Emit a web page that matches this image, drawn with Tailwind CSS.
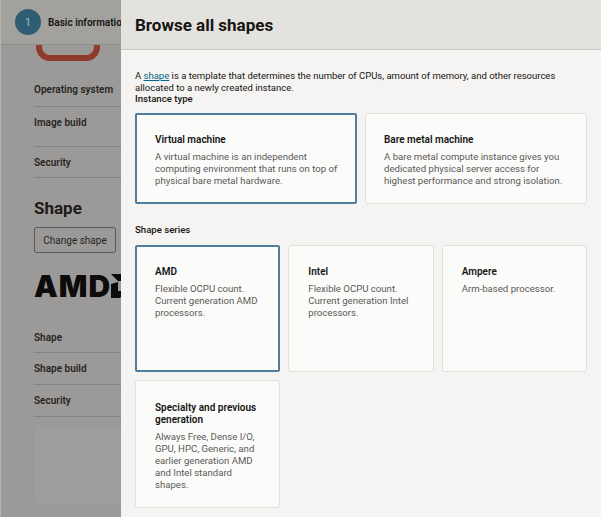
<!DOCTYPE html>
<html lang="en">
<head>
    <meta charset="UTF-8">
    <title>Browse all shapes</title>
    <script src="https://cdn.jsdelivr.net/npm/@tailwindcss/browser@4"></script>
</head>
<body class="bg-[#f5f4f2]">
    <div class="flex h-[517px] w-[601px] overflow-hidden font-['Roboto',sans-serif] text-[#161513]">
        <!-- Page behind the panel, dimmed -->
        <div class="w-[121px] shrink-0 h-full overflow-hidden bg-[#9c9a98] border-l border-[#b5b3b1]">
            <div class="h-[45px] flex items-center gap-[7px] pl-[14px] bg-[#a3a19e] border-b border-[#8f8d8b] whitespace-nowrap overflow-hidden">
                <div class="w-[26px] h-[26px] shrink-0 rounded-full bg-[#2f5d73] text-[#a9c0c9] text-[10px] flex items-center justify-center">1</div>
                <span class="text-[10px] font-semibold text-[#161513]">Basic information</span>
            </div>
            <div class="pl-[33px]">
                <div class="ml-[2px] w-[64px] h-[16px] border-[6px] border-t-0 border-[#8f3a2b] rounded-b-[14px]"></div>
                <div class="mt-[22px] h-[24px] border-b border-[#858381] text-[10px] font-semibold text-[#262523] leading-[14px] whitespace-nowrap">Operating system</div>
                <div class="mt-[8px] h-[32px] pt-[1px] border-b border-[#858381] text-[10px] font-semibold text-[#262523] leading-[14px]">Image build</div>
                <div class="mt-[8px] h-[23px] pt-[1px] border-b border-[#858381] text-[10px] font-semibold text-[#262523] leading-[14px]">Security</div>
                <div class="mt-[18px] text-[17px] font-bold leading-[24px] text-[#1c1b19]">Shape</div>
                <div class="mt-[7px] w-[82px] h-[26px] border border-[#5c5a58] rounded-[3px] flex items-center justify-center text-[10px] text-[#262523]">Change shape</div>
                <!-- AMD logo as type -->
                <div class="mt-[21px] h-[24px] flex items-center overflow-hidden whitespace-nowrap text-[#0d0c0b]">
                    <span class="text-[30px] font-black leading-[24px] font-['Inter',sans-serif] tracking-[1px]">AMD</span>
                    <svg class="shrink-0" width="24" height="24" viewBox="0 0 24 24"><path fill="#0d0c0b" d="M0 0h24v24l-7-7V7H7zM0 10l7-2v9h8l-6 7H0z"/></svg>
                </div>
                <div class="mt-[33px] h-[22px] border-b border-[#858381] text-[10px] font-semibold text-[#262523] leading-[14px]">Shape</div>
                <div class="mt-[9px] h-[23px] border-b border-[#858381] text-[10px] font-semibold text-[#262523] leading-[14px]">Shape build</div>
                <div class="mt-[9px] h-[23px] border-b border-[#858381] text-[10px] font-semibold text-[#262523] leading-[14px]">Security</div>
                <div class="mt-[9px] h-[79px] bg-[#9f9d9c] rounded-sm"></div>
            </div>
        </div>

        <!-- Browse all shapes panel -->
        <div class="flex-1 h-full overflow-hidden">
            <header class="h-[50px] bg-[#e4e2de] border-b border-[#c9c7c4] pl-[14px] flex items-center">
                <h1 class="text-[17px] font-bold leading-[24px]">Browse all shapes</h1>
            </header>
            <main class="px-[14px] pt-[20px]">
                <p class="text-[9.5px] leading-[11.5px] whitespace-nowrap">A <a href="#" class="text-[#00688c] underline">shape</a> is a template that determines the number of CPUs, amount of memory, and other resources<br>allocated to a newly created instance.</p>
                <div class="text-[9.6px] font-medium leading-[12px]">Instance type</div>

                <div class="mt-[8px] grid grid-cols-2 gap-[8px]">
                    <div class="h-[91px] bg-[#fbfbfa] border-2 border-[#4f7d9e] rounded-[2px] pl-[18px] pt-[18px]">
                        <h3 class="text-[10px] font-semibold leading-[14px]">Virtual machine</h3>
                        <p class="mt-[4px] text-[9.6px] leading-[12px] text-[#5c5a57]">A virtual machine is an independent<br>computing environment that runs on top of<br>physical bare metal hardware.</p>
                    </div>
                    <div class="h-[91px] bg-[#fbfbfa] border border-[#e2e0dd] rounded-[3px] pl-[18px] pt-[19px]">
                        <h3 class="text-[10px] font-semibold leading-[14px]">Bare metal machine</h3>
                        <p class="mt-[4px] text-[9.6px] leading-[12px] text-[#5c5a57]">A bare metal compute instance gives you<br>dedicated physical server access for<br>highest performance and strong isolation.</p>
                    </div>
                </div>

                <div class="mt-[20px] text-[9.6px] font-medium leading-[12px]">Shape series</div>

                <div class="mt-[9px] grid grid-cols-3 gap-[8px]">
                    <div class="h-[127px] bg-[#fbfbfa] border-2 border-[#4f7d9e] rounded-[2px] pl-[18px] pt-[18px]">
                        <h3 class="text-[10px] font-semibold leading-[14px]">AMD</h3>
                        <p class="mt-[4px] text-[9.6px] leading-[12px] text-[#5c5a57]">Flexible OCPU count.<br>Current generation AMD<br>processors.</p>
                    </div>
                    <div class="h-[127px] bg-[#fbfbfa] border border-[#e2e0dd] rounded-[3px] pl-[19px] pt-[19px]">
                        <h3 class="text-[10px] font-semibold leading-[14px]">Intel</h3>
                        <p class="mt-[4px] text-[9.6px] leading-[12px] text-[#5c5a57]">Flexible OCPU count.<br>Current generation Intel<br>processors.</p>
                    </div>
                    <div class="h-[127px] bg-[#fbfbfa] border border-[#e2e0dd] rounded-[3px] pl-[19px] pt-[19px]">
                        <h3 class="text-[10px] font-semibold leading-[14px]">Ampere</h3>
                        <p class="mt-[4px] text-[9.6px] leading-[12px] text-[#5c5a57]">Arm-based processor.</p>
                    </div>
                    <div class="h-[128px] bg-[#fbfbfa] border border-[#e2e0dd] rounded-[3px] pl-[19px] pt-[21px]">
                        <h3 class="text-[10px] font-semibold leading-[12px]">Specialty and previous<br>generation</h3>
                        <p class="mt-[5px] text-[9.6px] leading-[12px] text-[#5c5a57]">Always Free, Dense I/O,<br>GPU, HPC, Generic, and<br>earlier generation AMD<br>and Intel standard<br>shapes.</p>
                    </div>
                </div>
            </main>
        </div>
    </div>
</body>
</html>
